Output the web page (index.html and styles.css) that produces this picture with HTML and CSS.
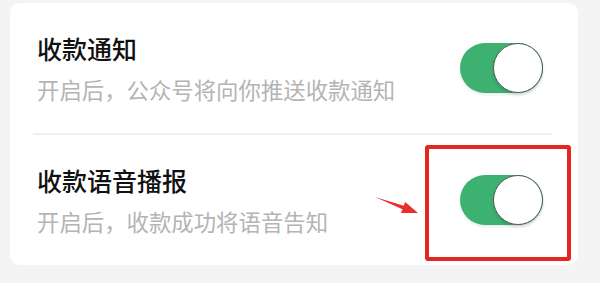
FILE: index.html
```html
<!DOCTYPE html>
<html lang="zh-CN">
<head>
  <meta charset="UTF-8">
  <title>收款设置</title>
  <link rel="stylesheet" href="styles.css">
</head>
<body>

<div class="card">
  <div class="row">
    <div class="text">
      <div class="title">收款通知</div>
      <div class="desc">开启后，公众号将向你推送收款通知</div>
    </div>
    <span class="switch on"><span class="knob"></span></span>
  </div>

  <div class="divider"></div>

  <div class="row marked">
    <div class="text">
      <div class="title">收款语音播报</div>
      <div class="desc">开启后，收款成功将语音告知</div>
    </div>
    <span class="switch on"><span class="knob"></span></span>

    <!-- 标注：红框 + 箭头 -->
    <span class="mark-box"></span>
    <svg class="mark-arrow" width="50" height="28" viewBox="0 0 50 28">
      <polygon points="3,7 31.7,15.8 33.2,11.9 46,23 29,23.1 30.5,19.2" fill="#e8302a"/>
    </svg>
  </div>
</div>

</body>
</html>
```

FILE: styles.css
```css
body {
  margin: 0;
  height: 283px;
  overflow: hidden;
  background: #f4f4f4;
  font-family: "Noto Sans CJK SC", "Noto Sans", sans-serif;
}

.card {
  margin: 3px 22px 0 10px;
  height: 262px;
  background: #fff;
  border-radius: 10px;
  display: flex;
  flex-direction: column;
}

.row {
  height: 131px;
  padding: 0 35px 0 27px;
  display: flex;
  align-items: center;
  justify-content: space-between;
  box-sizing: border-box;
}

.title {
  font-size: 25px;
  line-height: 32px;
  font-weight: 500;
  color: #111;
}

.desc {
  margin-top: 10px;
  font-size: 22.4px;
  line-height: 30px;
  color: #b4b4b4;
}

.divider {
  height: 2px;
  margin: 0 26px 0 23px;
  background: #efefef;
}

/* 开关 */
.switch {
  position: relative;
  width: 83px;
  height: 50px;
  border-radius: 25px;
  background: #3cb170;
  box-shadow: 0 2px 3px rgba(0, 0, 0, 0.08);
  flex-shrink: 0;
}

.switch .knob {
  position: absolute;
  top: 0;
  right: 0;
  width: 50px;
  height: 50px;
  box-sizing: border-box;
  border-radius: 50%;
  background: #fff;
  border: 1.5px solid #4d5c55;
  box-shadow: 0 2px 3px rgba(0, 0, 0, 0.12);
}

/* 标注 */
.marked {
  position: relative;
}

.mark-box {
  position: absolute;
  top: 10px;
  left: 415px;
  width: 146px;
  height: 116px;
  box-sizing: border-box;
  border: 4px solid #e5261f;
  border-radius: 3px;
}

.mark-arrow {
  position: absolute;
  left: 362px;
  top: 55px;
}
```
